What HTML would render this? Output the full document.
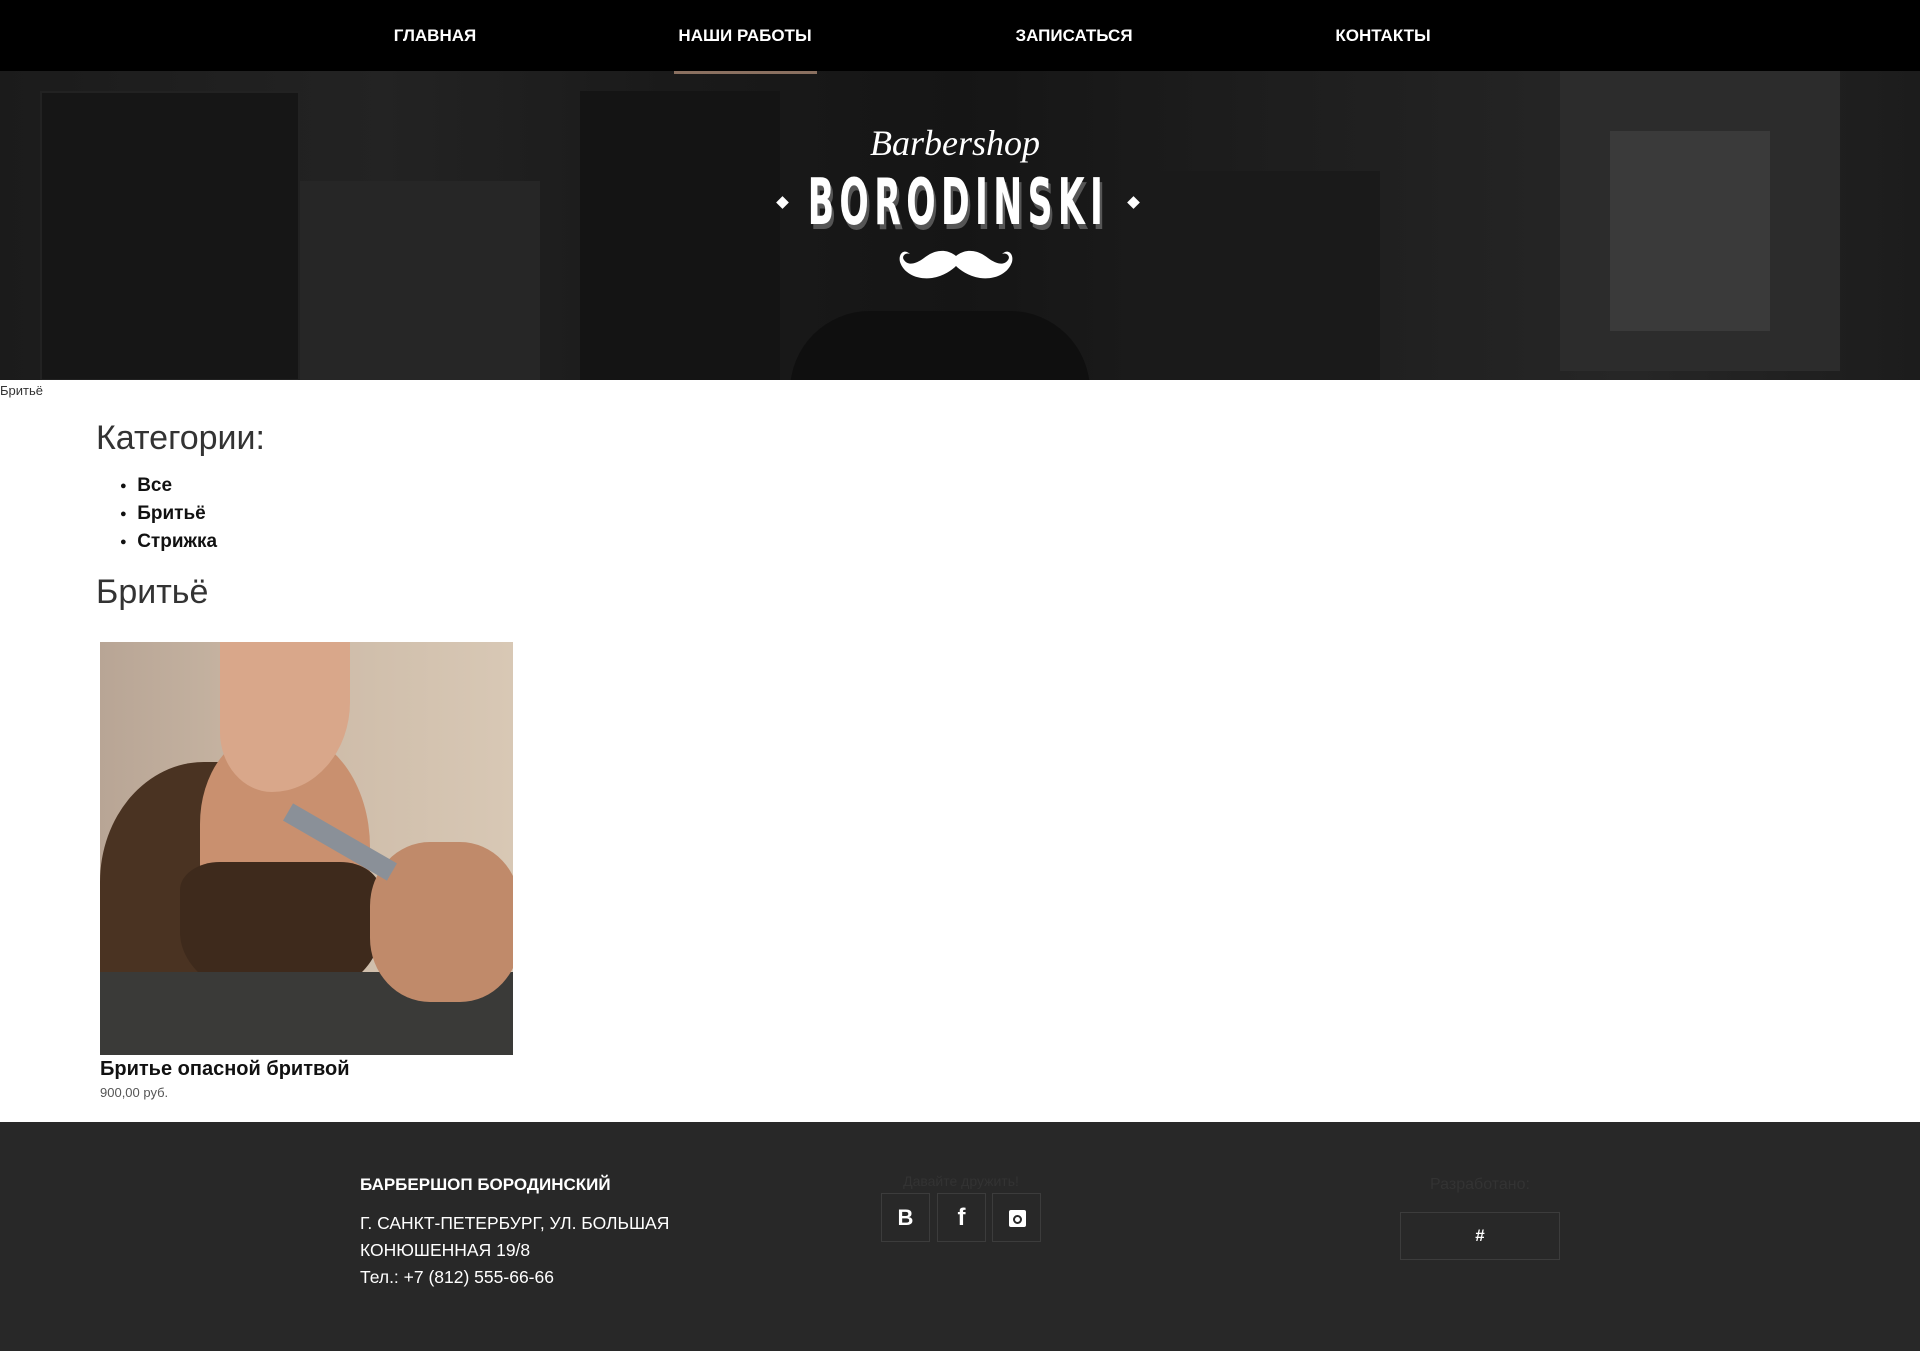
<!DOCTYPE html>
<html><head><meta charset="utf-8"><style>
*{margin:0;padding:0;box-sizing:border-box}
body{width:1920px;height:1351px;overflow:hidden;background:#fff;font-family:"Liberation Sans",Arial,sans-serif;position:relative}
.nav{position:absolute;top:0;left:0;width:1920px;height:71px;background:#000}
.nav a{position:absolute;top:26px;color:#fff;font-weight:bold;font-size:17px;transform:translateX(-50%);white-space:nowrap;text-decoration:none}
.ul{position:absolute;left:674px;top:71px;width:143px;height:3px;background:#8a7060}
.hero{position:absolute;top:71px;left:0;width:1920px;height:309px;background:linear-gradient(90deg,#1b1b1b 0%,#232323 20%,#1a1a1a 35%,#151515 50%,#1d1d1d 65%,#262626 85%,#1c1c1c 100%);overflow:hidden}
.hero div{position:absolute}
.a{position:absolute;color:#fff}
</style></head><body>
<div class="hero">
<div style="left:40px;top:20px;width:260px;height:290px;background:#161616;border:2px solid #222"></div>
<div style="left:300px;top:110px;width:240px;height:200px;background:#262626"></div>
<div style="left:580px;top:20px;width:200px;height:290px;background:#141414"></div>
<div style="left:790px;top:240px;width:300px;height:80px;border-radius:150px 150px 0 0;background:#0f0f0f"></div>
<div style="left:1140px;top:100px;width:240px;height:210px;background:#1a1a1a"></div>
<div style="left:1560px;top:0;width:280px;height:300px;background:#2c2c2c"></div>
<div style="left:1610px;top:60px;width:160px;height:200px;background:#3a3a3a"></div>
</div>
<div class="nav">
<a style="left:435px">ГЛАВНАЯ</a>
<a style="left:745px">НАШИ РАБОТЫ</a>
<a style="left:1074px">ЗАПИСАТЬСЯ</a>
<a style="left:1383px">КОНТАКТЫ</a>
</div>
<div class="ul"></div>
<div class="a" style="left:955px;top:122px;transform:translateX(-50%);font-family:'Liberation Serif',serif;font-style:italic;font-size:36px">Barbershop</div>
<div class="a" style="left:958px;top:170px;font-family:'DejaVu Sans Condensed','Liberation Sans',sans-serif;font-weight:bold;font-size:64px;letter-spacing:9px;line-height:66px;text-shadow:4px 5px 0 #555;transform:translateX(-50%) scaleX(0.6);white-space:nowrap">BORODINSKI</div>
<div class="a" style="left:778px;top:198px;width:9px;height:9px;background:#fff;transform:rotate(45deg)"></div>
<div class="a" style="left:1129px;top:198px;width:9px;height:9px;background:#fff;transform:rotate(45deg)"></div>
<svg style="position:absolute;left:898px;top:248px" width="116" height="34" viewBox="0 0 116 34"><path d="M58 8C48 0 36 2 26 10 18 16 10 18 6 12 3 8 8 4 12 6 6 0 0 6 2 14 6 26 20 32 34 30 46 28 54 22 58 18 62 22 70 28 82 30 96 32 110 26 114 14 116 6 110 0 104 6 108 4 113 8 110 12 106 18 98 16 90 10 80 2 68 0 58 8Z" fill="#fff"/></svg>
<div style="position:absolute;left:0;top:383px;font-size:13px;color:#333">Бритьё</div>
<div style="position:absolute;left:96px;top:419px;font-size:34px;color:#333">Категории:</div>
<div style="position:absolute;left:120px;top:472px;font-size:19px;font-weight:bold;color:#111;line-height:28px">
<div><span style="font-size:11px;vertical-align:middle">●</span>&nbsp;&nbsp;Все</div><div><span style="font-size:11px;vertical-align:middle">●</span>&nbsp;&nbsp;Бритьё</div><div><span style="font-size:11px;vertical-align:middle">●</span>&nbsp;&nbsp;Стрижка</div></div>
<div style="position:absolute;left:96px;top:573px;font-size:34px;color:#333">Бритьё</div>
<div style="position:absolute;left:100px;top:642px;width:413px;height:413px;overflow:hidden;background:linear-gradient(90deg,#b8a595,#cdbba8 50%,#d8c8b5)">
<div style="position:absolute;left:0;top:120px;width:260px;height:300px;background:#4a3322;border-radius:40% 30% 0 0"></div>
<div style="position:absolute;left:100px;top:90px;width:170px;height:230px;background:#c9906f;border-radius:40% 50% 40% 30%"></div>
<div style="position:absolute;left:80px;top:220px;width:200px;height:140px;background:#3e2a1c;border-radius:20% 20% 50% 50%"></div>
<div style="position:absolute;left:0;top:330px;width:413px;height:90px;background:#3a3a38"></div>
<div style="position:absolute;left:120px;top:0;width:130px;height:150px;background:#d9a78a;border-radius:0 0 60% 40%"></div>
<div style="position:absolute;left:270px;top:200px;width:150px;height:160px;background:#c08a6a;border-radius:40%"></div>
<div style="position:absolute;left:180px;top:190px;width:120px;height:20px;background:#8a9098;transform:rotate(30deg)"></div>
</div>
<div style="position:absolute;left:100px;top:1058px;font-size:20px;font-weight:bold;color:#111">Бритье опасной бритвой</div>
<div style="position:absolute;left:100px;top:1085px;font-size:13px;color:#555">900,00 руб.</div>
<div style="position:absolute;left:0;top:1122px;width:1920px;height:229px;background:#282828;color:#fff">
<div style="position:absolute;left:360px;top:53px;font-size:17px;font-weight:bold">БАРБЕРШОП БОРОДИНСКИЙ</div>
<div style="position:absolute;left:360px;top:88px;font-size:17.5px;line-height:27px">Г. САНКТ-ПЕТЕРБУРГ, УЛ. БОЛЬШАЯ<br>КОНЮШЕННАЯ 19/8<br>Тел.: +7 (812) 555-66-66</div>
<div style="position:absolute;left:961px;top:51px;transform:translateX(-50%);font-size:14px;color:#333;white-space:nowrap">Давайте дружить!</div>
<div style="position:absolute;left:881px;top:71px;width:49px;height:49px;border:1px solid #3c3c3c;text-align:center;line-height:47px;font-weight:bold;font-size:22px">B</div>
<div style="position:absolute;left:937px;top:71px;width:49px;height:49px;border:1px solid #3c3c3c;text-align:center;line-height:47px;font-weight:bold;font-size:24px">f</div>
<div style="position:absolute;left:992px;top:71px;width:49px;height:49px;border:1px solid #3c3c3c"><div style="position:absolute;left:16px;top:16px;width:17px;height:17px;background:#fff;border-radius:2px"><div style="position:absolute;left:4px;top:5px;width:9px;height:9px;border:2px solid #282828;border-radius:50%"></div></div></div>
<div style="position:absolute;left:1480px;top:54px;transform:translateX(-50%);font-size:16px;color:#333;white-space:nowrap">Разработано:</div>
<div style="position:absolute;left:1400px;top:90px;width:160px;height:48px;border:1px solid #3c3c3c;text-align:center;line-height:46px;font-weight:bold;font-size:17px">#</div>
</div>
</body></html>
